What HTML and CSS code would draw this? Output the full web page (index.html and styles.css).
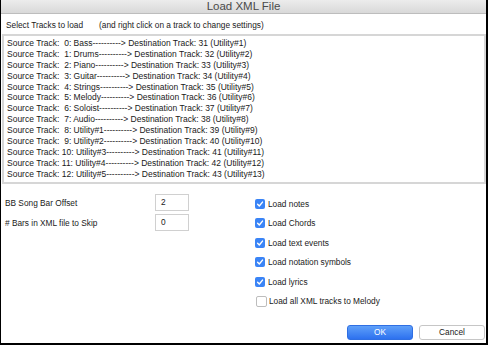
FILE: index.html
```html
<!DOCTYPE html>
<html>
<head>
<meta charset="utf-8">
<link rel="stylesheet" href="styles.css">
</head>
<body>
<div class="dialog">
  <div class="titlebar">Load XML File</div>
  <div class="heading"><span>Select Tracks to load</span><span class="hint">(and right click on a track to change settings)</span></div>
  <div class="tracklist">
    <div class="row">Source Track:  0: Bass----------&gt; Destination Track: 31 (Utility#1)</div>
    <div class="row">Source Track:  1: Drums----------&gt; Destination Track: 32 (Utility#2)</div>
    <div class="row">Source Track:  2: Piano----------&gt; Destination Track: 33 (Utility#3)</div>
    <div class="row">Source Track:  3: Guitar----------&gt; Destination Track: 34 (Utility#4)</div>
    <div class="row">Source Track:  4: Strings----------&gt; Destination Track: 35 (Utility#5)</div>
    <div class="row">Source Track:  5: Melody----------&gt; Destination Track: 36 (Utility#6)</div>
    <div class="row">Source Track:  6: Soloist----------&gt; Destination Track: 37 (Utility#7)</div>
    <div class="row">Source Track:  7: Audio----------&gt; Destination Track: 38 (Utility#8)</div>
    <div class="row">Source Track:  8: Utility#1----------&gt; Destination Track: 39 (Utility#9)</div>
    <div class="row">Source Track:  9: Utility#2----------&gt; Destination Track: 40 (Utility#10)</div>
    <div class="row">Source Track: 10: Utility#3----------&gt; Destination Track: 41 (Utility#11)</div>
    <div class="row">Source Track: 11: Utility#4----------&gt; Destination Track: 42 (Utility#12)</div>
    <div class="row">Source Track: 12: Utility#5----------&gt; Destination Track: 43 (Utility#13)</div>
  </div>
  <div class="options">
    <div class="fields">
      <div class="field"><span class="label">BB Song Bar Offset</span><span class="input">2</span></div>
      <div class="field"><span class="label"># Bars in XML file to Skip</span><span class="input">0</span></div>
    </div>
    <div class="checks">
      <div class="check"><span class="box on"><svg viewBox="0 0 10 10" width="10" height="10"><path d="M2.6 5.3 L4.3 7 L7.5 3.1" fill="none" stroke="#fff" stroke-width="1.4" stroke-linecap="round" stroke-linejoin="round"/></svg></span>Load notes</div>
      <div class="check"><span class="box on"><svg viewBox="0 0 10 10" width="10" height="10"><path d="M2.6 5.3 L4.3 7 L7.5 3.1" fill="none" stroke="#fff" stroke-width="1.4" stroke-linecap="round" stroke-linejoin="round"/></svg></span>Load Chords</div>
      <div class="check"><span class="box on"><svg viewBox="0 0 10 10" width="10" height="10"><path d="M2.6 5.3 L4.3 7 L7.5 3.1" fill="none" stroke="#fff" stroke-width="1.4" stroke-linecap="round" stroke-linejoin="round"/></svg></span>Load text events</div>
      <div class="check"><span class="box on"><svg viewBox="0 0 10 10" width="10" height="10"><path d="M2.6 5.3 L4.3 7 L7.5 3.1" fill="none" stroke="#fff" stroke-width="1.4" stroke-linecap="round" stroke-linejoin="round"/></svg></span>Load notation symbols</div>
      <div class="check"><span class="box on"><svg viewBox="0 0 10 10" width="10" height="10"><path d="M2.6 5.3 L4.3 7 L7.5 3.1" fill="none" stroke="#fff" stroke-width="1.4" stroke-linecap="round" stroke-linejoin="round"/></svg></span>Load lyrics</div>
      <div class="check"><span class="box off"></span>Load all XML tracks to Melody</div>
    </div>
  </div>
  <div class="buttons">
    <span class="btn primary">OK</span>
    <span class="btn">Cancel</span>
  </div>
</div>
</body>
</html>
```

FILE: styles.css
```css
* { box-sizing: border-box; }
html, body { margin: 0; padding: 0; background: #fff; }
body { width: 488px; height: 345px; overflow: hidden; font-family: "Liberation Sans", Arial, sans-serif; font-size: 8.3px; color: #1a1a1a; }
.dialog {
  width: 488px; height: 345px;
  border-left: 1px solid #000; border-right: 2px solid #000; border-bottom: 2px solid #000;
  display: flex; flex-direction: column; background: #fff;
}
.titlebar {
  height: 14px; line-height: 13px; text-align: center;
  font-size: 11.5px; color: #4a4a4a;
  background: linear-gradient(#ececec, #d9d9d9);
  border-bottom: 1px solid #bdbdbd;
}
.heading { height: 20px; line-height: 22px; padding-left: 5px; color: #1a1a1a; }
.heading .hint { margin-left: 16px; }
.tracklist {
  margin: 0 0 0 1px; height: 150px;
  border: 2px solid #d6d6d6; padding: 2px 0 0 3px;
  font-size: 8.5px;
}
.row { white-space: pre; line-height: 10.9px; height: 10.9px; }
.options { display: flex; margin-top: 10px; }
.fields { width: 254px; padding-left: 4px; display: flex; flex-direction: column; gap: 3px; }
.field { display: flex; align-items: center; height: 17px; }
.label { width: 150px; }
.input {
  width: 34px; height: 17px; border: 1px solid #d0d0d0; padding-left: 5px;
  line-height: 15px; background: #fff;
}
.checks { display: flex; flex-direction: column; }
.check { display: flex; align-items: center; height: 19.5px; }
.box { width: 10px; height: 10px; border-radius: 2px; margin-right: 3px; display: flex; }
.box.on { background: #3a84f6; }
.box.off { width: 11px; height: 11px; border: 1px solid #bdbdbd; background: #fff; margin-left: 1px; margin-right: 2px; }
.buttons { margin-top: auto; display: flex; justify-content: flex-end; gap: 6px; padding: 0 1px 3px 0; }
.btn {
  width: 66px; height: 15px; line-height: 13px; text-align: center;
  border-radius: 3px; border: 1px solid #c6c6c6; background: #fff; color: #1a1a1a;
}
.btn.primary { background: linear-gradient(#5fa0f9, #2d71ef); border-color: #2f6fe3; color: #fff; }
```
